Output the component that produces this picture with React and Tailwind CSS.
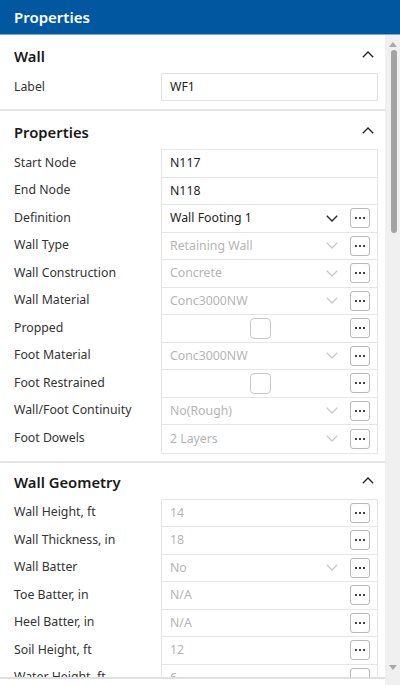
import React from "react";

const propertyRows = [
  { label: "Start Node", value: "N117", kind: "text", enabled: true, button: false },
  { label: "End Node", value: "N118", kind: "text", enabled: true, button: false },
  { label: "Definition", value: "Wall Footing 1", kind: "select", enabled: true, button: true },
  { label: "Wall Type", value: "Retaining Wall", kind: "select", enabled: false, button: true },
  { label: "Wall Construction", value: "Concrete", kind: "select", enabled: false, button: true },
  { label: "Wall Material", value: "Conc3000NW", kind: "select", enabled: false, button: true },
  { label: "Propped", kind: "check", button: true },
  { label: "Foot Material", value: "Conc3000NW", kind: "select", enabled: false, button: true },
  { label: "Foot Restrained", kind: "check", button: true },
  { label: "Wall/Foot Continuity", value: "No(Rough)", kind: "select", enabled: false, button: true },
  { label: "Foot Dowels", value: "2 Layers", kind: "select", enabled: false, button: true },
];

const geometryRows = [
  { label: "Wall Height, ft", value: "14", kind: "text", enabled: false, button: true },
  { label: "Wall Thickness, in", value: "18", kind: "text", enabled: false, button: true },
  { label: "Wall Batter", value: "No", kind: "select", enabled: false, button: true },
  { label: "Toe Batter, in", value: "N/A", kind: "text", enabled: false, button: true },
  { label: "Heel Batter, in", value: "N/A", kind: "text", enabled: false, button: true },
  { label: "Soil Height, ft", value: "12", kind: "text", enabled: false, button: true },
  { label: "Water Height, ft", value: "6", kind: "text", enabled: false, button: true },
  { label: "Toe Length, ft", value: "3", kind: "text", enabled: false, button: true },
];

const ChevronDown = ({ enabled }) => (
  <svg width="12" height="7" viewBox="0 0 12 7" className="shrink-0">
    <path
      d="M0.8 0.8 L6 6 L11.2 0.8"
      fill="none"
      stroke={enabled ? "#222222" : "#c9c9c9"}
      strokeWidth="1.3"
    />
  </svg>
);

const ChevronUp = () => (
  <svg width="12" height="7" viewBox="0 0 12 7">
    <path d="M0.8 6.2 L6 1 L11.2 6.2" fill="none" stroke="#222222" strokeWidth="1.3" />
  </svg>
);

const DotsButton = () => (
  <div className="w-[20px] h-[20px] shrink-0 rounded-[3px] border border-[#b9b9b9] bg-white flex items-center justify-center gap-[2px]">
    <span className="w-[2px] h-[2px] bg-[#444]" />
    <span className="w-[2px] h-[2px] bg-[#444]" />
    <span className="w-[2px] h-[2px] bg-[#444]" />
  </div>
);

const ValueCell = ({ row, last }) => {
  const color = row.enabled ? "text-[#1e1e1e]" : "text-[#b5b5b5]";
  return (
    <div
      className={
        "h-[27.5px] flex items-center pl-2 pr-[7px] " +
        (last ? "" : "border-b border-[#e6e6e6]")
      }
    >
      {row.kind === "check" ? (
        <div className="flex-1 flex justify-center">
          <div className="w-[21px] h-[21px] rounded-[4px] border border-[#c8c8c8] bg-white" />
        </div>
      ) : (
        <span className={"flex-1 truncate " + color}>{row.value}</span>
      )}
      {row.kind === "select" && (
        <div className="mr-[12px] flex items-center">
          <ChevronDown enabled={row.enabled} />
        </div>
      )}
      {row.button && <DotsButton />}
    </div>
  );
};

const SectionHeader = ({ title, tall }) => (
  <div
    className={
      (tall ? "h-[38px]" : "h-[36px]") +
      " pt-1 flex items-center justify-between pl-[14px] pr-[11px]"
    }
  >
    <span className="text-[14.8px] font-semibold text-[#1a1a1a]">{title}</span>
    <div className="-mt-[4px]">
      <ChevronUp />
    </div>
  </div>
);

const Section = ({ title, rows, tall }) => (
  <div className="pb-[7px] border-b-2 border-[#e4e4e4]">
    <SectionHeader title={title} tall={tall} />
    <div className="flex pl-[14px] pr-[7px]">
      <div className="w-[147px] shrink-0">
        {rows.map((r) => (
          <div key={r.label} className="h-[27.5px] flex items-center text-[#333]">
            {r.label}
          </div>
        ))}
      </div>
      <div className="flex-1 border border-[#e6e6e6]">
        {rows.map((r, i) => (
          <ValueCell key={r.label} row={r} last={i === rows.length - 1} />
        ))}
      </div>
    </div>
  </div>
);

export default function App() {
  return (
    <div
      className="w-[400px] h-[685px] flex flex-col bg-white text-[12.3px] overflow-hidden"
      style={{ fontFamily: '"Noto Sans", "Open Sans", sans-serif' }}
    >
      <div className="h-[35px] shrink-0 bg-[#0158a1] border-b border-[#7ea6d3] flex items-center px-[14px]">
        <span className="text-white text-[15px] font-semibold">Properties</span>
      </div>

      <div className="flex-1 flex min-h-0">
        <div className="flex-1 flex flex-col min-w-0">
          <div className="flex-1 overflow-hidden">
            {/* Wall */}
            <div className="pb-2 border-b-2 border-[#e4e4e4]">
              <SectionHeader title="Wall" tall />
              <div className="flex pl-[14px] pr-[7px]">
                <div className="w-[147px] shrink-0 h-[28px] flex items-center text-[#333]">
                  Label
                </div>
                <div className="flex-1 h-[28px] border border-[#e2e2e2] flex items-center pl-2 text-[#1e1e1e]">
                  WF1
                </div>
              </div>
            </div>

            <Section title="Properties" rows={propertyRows} tall />
            <Section title="Wall Geometry" rows={geometryRows} />
          </div>
          <div className="h-[8px] shrink-0 border-t-2 border-[#e0e0e0] bg-white" />
        </div>

        {/* scrollbar */}
        <div className="w-[15px] shrink-0 bg-[#f0f0f0] flex flex-col items-center">
          <div className="h-[14px] flex items-center justify-center pt-[4px]">
            <svg width="8" height="5" viewBox="0 0 8 5">
              <path d="M0 5 L4 0 L8 5 Z" fill="#a8a8a8" />
            </svg>
          </div>
          <div className="flex-1 w-full flex flex-col items-center pt-[1px]">
            <div className="w-[6px] h-[183px] rounded-full bg-[#a3a3a3] ml-[2px]" />
          </div>
          <div className="h-[20px] flex items-start justify-center">
            <svg width="8" height="5" viewBox="0 0 8 5">
              <path d="M0 0 L8 0 L4 5 Z" fill="#a8a8a8" />
            </svg>
          </div>
        </div>
      </div>
    </div>
  );
}
